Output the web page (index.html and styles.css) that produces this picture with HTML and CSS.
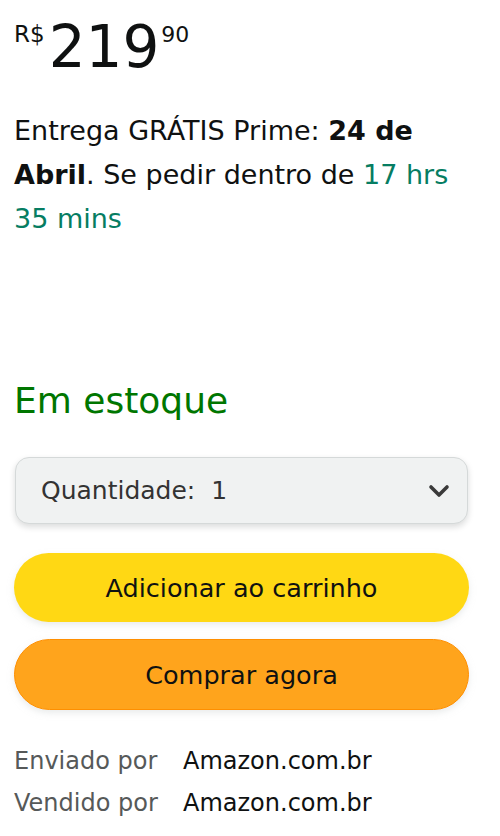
FILE: index.html
```html
<!DOCTYPE html>
<html lang="pt-BR">
<head>
    <meta charset="UTF-8">
    <meta name="viewport" content="width=device-width, initial-scale=1.0">
    <link rel="stylesheet" href="styles.css">
    <title>Comprar</title>
</head>
<body>

<div class="buyBox">
    <div class="price">
        <span class="priceSymbol">R$</span>
        <span class="priceWhole">219</span>
        <span class="priceFraction">90</span>
    </div>

    <p class="delivery">
        Entrega GRÁTIS Prime: <strong>24 de Abril</strong>. Se pedir dentro de <span class="countdown">17 hrs 35 mins</span>
    </p>

    <div class="spacer"></div>

    <div class="stock">Em estoque</div>

    <div class="quantity">
        <span>Quantidade:&nbsp; 1</span>
        <svg class="chevron" width="22" height="14" viewBox="0 0 22 14">
            <path d="M3 3 L11 11 L19 3" fill="none" stroke="#3a3a3a" stroke-width="3.6" stroke-linecap="round" stroke-linejoin="round"/>
        </svg>
    </div>

    <button class="btn btnCart">Adicionar ao carrinho</button>
    <button class="btn btnBuy">Comprar agora</button>

    <div class="seller">
        <span class="sellerLabel">Enviado por</span>
        <span class="sellerName">Amazon.com.br</span>
        <span class="sellerLabel">Vendido por</span>
        <span class="sellerName">Amazon.com.br</span>
    </div>
</div>

</body>
</html>
```

FILE: styles.css
```css
body {
    font-family: 'DejaVu Sans', 'Noto Sans', sans-serif;
    background-color: #ffffff;
    color: #0f1111;
    margin: 0;
    padding: 0;
}

.buyBox {
    width: 455px;
    padding: 0 0 0 14px;
}

.price {
    display: flex;
    align-items: flex-start;
    padding-top: 18px;
}

.priceSymbol {
    font-size: 23px;
    line-height: 1;
    margin-top: 5px;
    margin-right: 4px;
}

.priceWhole {
    font-size: 58px;
    line-height: 1;
}

.priceFraction {
    font-size: 22px;
    line-height: 1;
    margin-top: 6px;
    margin-left: 2px;
}

.delivery {
    font-size: 27px;
    line-height: 44px;
    margin: 33px 0 0;
}

.delivery strong {
    font-weight: bold;
}

.countdown {
    color: #067d62;
}

.spacer {
    height: 136px;
}

.stock {
    color: #007600;
    font-size: 36px;
    line-height: 48px;
}

.quantity {
    display: flex;
    align-items: center;
    justify-content: space-between;
    box-sizing: border-box;
    height: 67px;
    margin: 32px 1px 0;
    padding: 0 17px 0 25px;
    background-color: #f0f2f2;
    border: 1.5px solid #d5d9d9;
    border-radius: 14px;
    box-shadow: 0 3px 6px rgba(15, 17, 17, 0.15);
    font-size: 25px;
    color: #333;
}

.btn {
    display: block;
    width: 100%;
    height: 69px;
    border: none;
    border-radius: 36px;
    font-family: inherit;
    font-size: 25.5px;
    color: #0f1111;
    box-shadow: 0 3px 6px rgba(213, 217, 217, 0.5);
    cursor: pointer;
}

.btnCart {
    background-color: #ffd814;
    margin-top: 29px;
}

.btnBuy {
    height: 71px;
    background-color: #ffa41c;
    border: 1.5px solid #ff8f00;
    margin-top: 17px;
}

.seller {
    display: grid;
    grid-template-columns: 169px auto;
    margin-top: 30px;
    font-size: 24px;
    line-height: 42px;
}

.sellerLabel {
    color: #565959;
}
```
